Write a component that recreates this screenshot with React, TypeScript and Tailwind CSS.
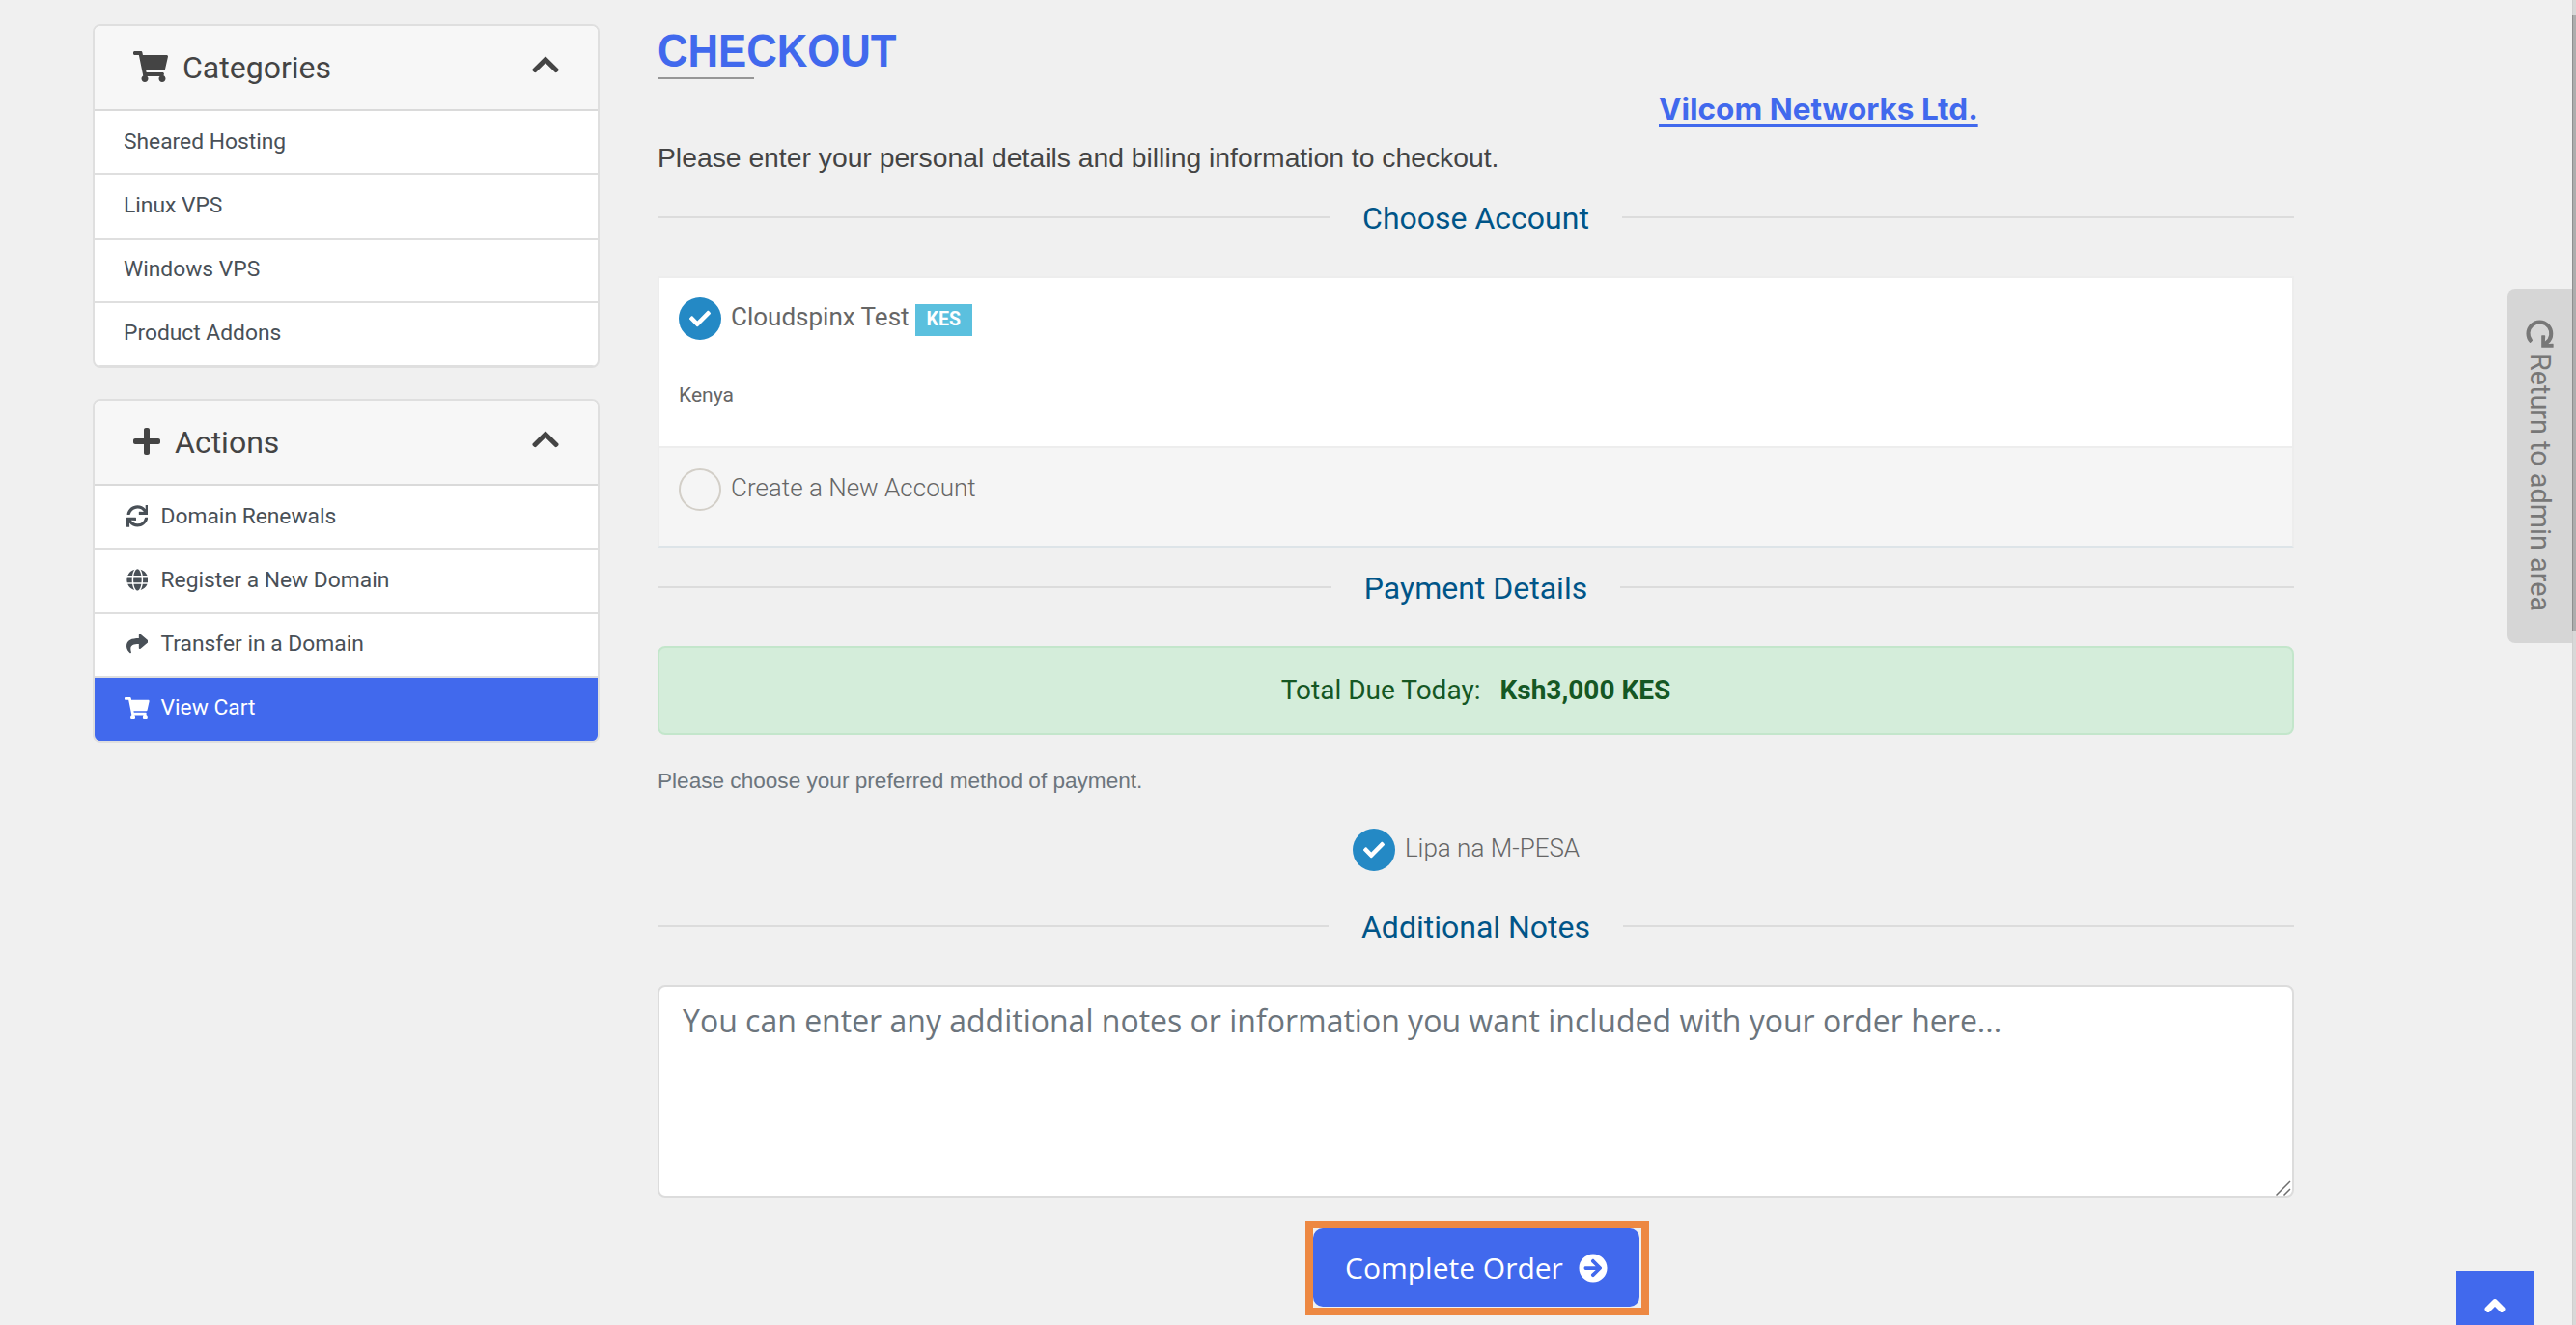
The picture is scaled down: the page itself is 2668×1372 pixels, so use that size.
import type { ReactNode } from "react"
import type { IconType } from "react-icons"
import {
  FaAngleUp,
  FaArrowCircleRight,
  FaCheck,
  FaChevronUp,
  FaGlobe,
  FaPlus,
  FaRedo,
  FaShare,
  FaShoppingCart,
  FaSync,
} from "react-icons/fa"
import { clsx } from "clsx"

interface MenuItem {
  label: string
  icon?: IconType
  active?: boolean
}

const categories: MenuItem[] = [
  { label: "Sheared Hosting" },
  { label: "Linux VPS" },
  { label: "Windows VPS" },
  { label: "Product Addons" },
]

const actions: MenuItem[] = [
  { label: "Domain Renewals", icon: FaSync },
  { label: "Register a New Domain", icon: FaGlobe },
  { label: "Transfer in a Domain", icon: FaShare },
  { label: "View Cart", icon: FaShoppingCart, active: true },
]

interface SidebarCardProps {
  title: string
  icon: ReactNode
  items: MenuItem[]
}

function SidebarCard({ title, icon, items }: SidebarCardProps) {
  return (
    <section className="h-[356px] overflow-hidden rounded-lg border-2 border-[#dfdfdf] bg-white">
      <header className="flex h-[88px] items-center border-b-2 border-[#dadada] bg-[#f7f7f7] px-10 text-[32px] text-[#444]">
        {icon}
        <h3 className="ml-[15px] flex-1">{title}</h3>
        <FaChevronUp className="mb-1.5 h-8 w-7" />
      </header>
      <ul>
        {items.map(({ label, icon: ItemIcon, active }) => (
          <li key={label}>
            <a
              href="#"
              className={clsx(
                "flex h-[66.3px] items-center border-b-2 pl-[30px] text-[22.8px]",
                active ? "border-[#4169ed] bg-[#4169ed] text-white" : "border-[#dfdfdf] text-[#495057]",
              )}
            >
              {ItemIcon && (
                <span className="mr-[10.5px] flex w-[28px] justify-center">
                  <ItemIcon className={clsx("mb-0.5 h-[1em]", active ? "w-[1.125em]" : "w-[1em]")} />
                </span>
              )}
              <span className="pb-px">{label}</span>
            </a>
          </li>
        ))}
      </ul>
    </section>
  )
}

function SubHeading({ children }: { children: ReactNode }) {
  return (
    <div className="flex h-9 items-center gap-[34px]">
      <span className="mb-0.5 h-0.5 flex-1 bg-[#dcdcdc]" />
      <h2 className="pb-px text-[32px] leading-9 text-[#058]">{children}</h2>
      <span className="mb-0.5 h-0.5 flex-1 bg-[#dcdcdc]" />
    </div>
  )
}

function Radio({ checked }: { checked?: boolean }) {
  return (
    <span
      className={clsx(
        "mr-[10px] flex size-11 shrink-0 items-center justify-center rounded-full text-[22px] text-white",
        checked ? "bg-[#2489c5]" : "border-2 border-[#d3cfc8]",
      )}
    >
      {checked && <FaCheck />}
    </span>
  )
}

export default function App() {
  return (
    <div className="relative h-[1372px] w-[2668px] overflow-hidden bg-[#f0f0f0] font-['Roboto',sans-serif]">
      <div className="flex pl-24">
        <aside className="mr-[60px] flex w-[525px] flex-col gap-8 pt-[25px]">
          <SidebarCard
            title="Categories"
            icon={<FaShoppingCart className="mb-0.5 h-8 w-9" />}
            items={categories}
          />
          <SidebarCard title="Actions" icon={<FaPlus className="mb-0.5 h-8 w-7" />} items={actions} />
        </aside>

        <main className="flex w-[1695px] flex-col pt-[26px]">
          <h1 className="origin-left scale-x-[0.91] self-start font-['Liberation_Sans',sans-serif] text-[48px] leading-[54px] font-bold text-[#4169ed]">
            CHECKOUT
          </h1>
          <div className="h-0.5 w-[100px] bg-[#969696]" />

          <a
            href="#"
            className="mt-3 ml-[1037px] self-start font-['Inter',sans-serif] text-[31.5px] leading-[38px] font-bold text-[#4169ed] underline decoration-[3px] underline-offset-[4px] [text-decoration-skip-ink:none]"
          >
            Vilcom Networks Ltd.
          </a>

          <p className="mt-[10px] mb-6 font-['Liberation_Sans',sans-serif] text-[28.3px] leading-[42px] text-[#444]">
            Please enter your personal details and billing information to checkout.
          </p>

          <SubHeading>Choose Account</SubHeading>

          <div className="mt-[42px] mb-6 h-[281px] border-2 border-[#ededed] border-b-[#dde4e8] text-[26px] text-[#666]">
            <div className="h-44 border-b-2 border-[#ededed] bg-white px-5 pt-5">
              <label className="flex items-center">
                <Radio checked />
                <span className="pb-1">Cloudspinx Test</span>
                <span className="mt-[3px] ml-1.5 flex h-[33px] items-center bg-[#5bc0de] px-[12px] pb-[2px] text-[19.5px] font-bold text-white">
                  KES
                </span>
              </label>
              <p className="mt-[42px] text-[21px] leading-[30px]">Kenya</p>
            </div>
            <div className="h-[101px] bg-[#f5f5f5] px-5 pt-[21px]">
              <label className="flex items-center font-light">
                <Radio />
                <span className="pb-1">Create a New Account</span>
              </label>
            </div>
          </div>

          <SubHeading>Payment Details</SubHeading>

          <div className="mt-[42px] flex h-[92px] items-center justify-center gap-5 rounded-lg border-2 border-[#c3e6cb] bg-[#d4edda] pb-px text-[28px] text-[#155724]">
            <span>Total Due Today:</span>
            <strong className="font-bold">Ksh3,000 KES</strong>
          </div>

          <p className="mt-[31px] font-['Liberation_Sans',sans-serif] text-[22.6px] leading-[34px] text-[#6c757d]">
            Please choose your preferred method of payment.
          </p>

          <label className="mt-8 mb-10 flex items-center justify-center pr-5 text-[26px] font-light text-[#666]">
            <Radio checked />
            <span className="pb-1">Lipa na M-PESA</span>
          </label>

          <SubHeading>Additional Notes</SubHeading>

          <div className="relative mt-[42px] h-[220px]">
            <textarea
              className="block size-full resize-none rounded-lg border-2 border-[#dcdcdc] bg-white px-6 pt-[11px] font-['Open_Sans',sans-serif] text-[32px] leading-[48px] placeholder:text-[#6c757d] placeholder:opacity-100"
              placeholder="You can enter any additional notes or information you want included with your order here..."
            />
            <svg
              className="absolute right-[3px] bottom-[2px] size-4"
              viewBox="0 0 16 16"
              fill="none"
              stroke="#6e6e6e"
              strokeWidth="1.5"
            >
              <path d="M.5 15.5 15 1M8.5 15.5 15 9" />
            </svg>
          </div>

          {/* Highlight frame around the submit button */}
          <div className="mt-6 ml-[671px] h-[98px] w-[356px] border-8 border-[#ed8842]">
            <button className="flex h-[81px] w-[338px] items-center rounded-[10px] bg-[#4169ed] pl-[33px] font-['Open_Sans',sans-serif] text-[30px] text-white">
              Complete Order
              <FaArrowCircleRight className="ml-4" />
            </button>
          </div>
        </main>
      </div>

      <a
        href="#"
        className="absolute top-[299px] right-1 flex h-[367px] w-[67px] items-center rounded-l-lg bg-[#d6d6d6] pt-8 text-[28.8px] leading-[67px] text-[#777] [writing-mode:vertical-rl]"
      >
        <FaRedo className="rotate-90" />
        <span className="mt-[6px]">Return to admin area</span>
      </a>

      <a
        href="#"
        className="absolute top-[1316px] right-11 flex h-20 w-20 justify-center bg-[#4169ed] pt-5 text-[32px] text-white"
      >
        <FaAngleUp className="stroke-white stroke-[20px]" />
      </a>

      {/* Page scrollbar */}
      <div className="absolute inset-y-0 right-0 w-1 border-l border-[#cfcfcf] bg-[#d8d8d8]">
        <div className="mt-4 -ml-px h-[637px] w-1 border-l border-[#8f8f8f] bg-[#adadad]" />
      </div>
    </div>
  )
}
